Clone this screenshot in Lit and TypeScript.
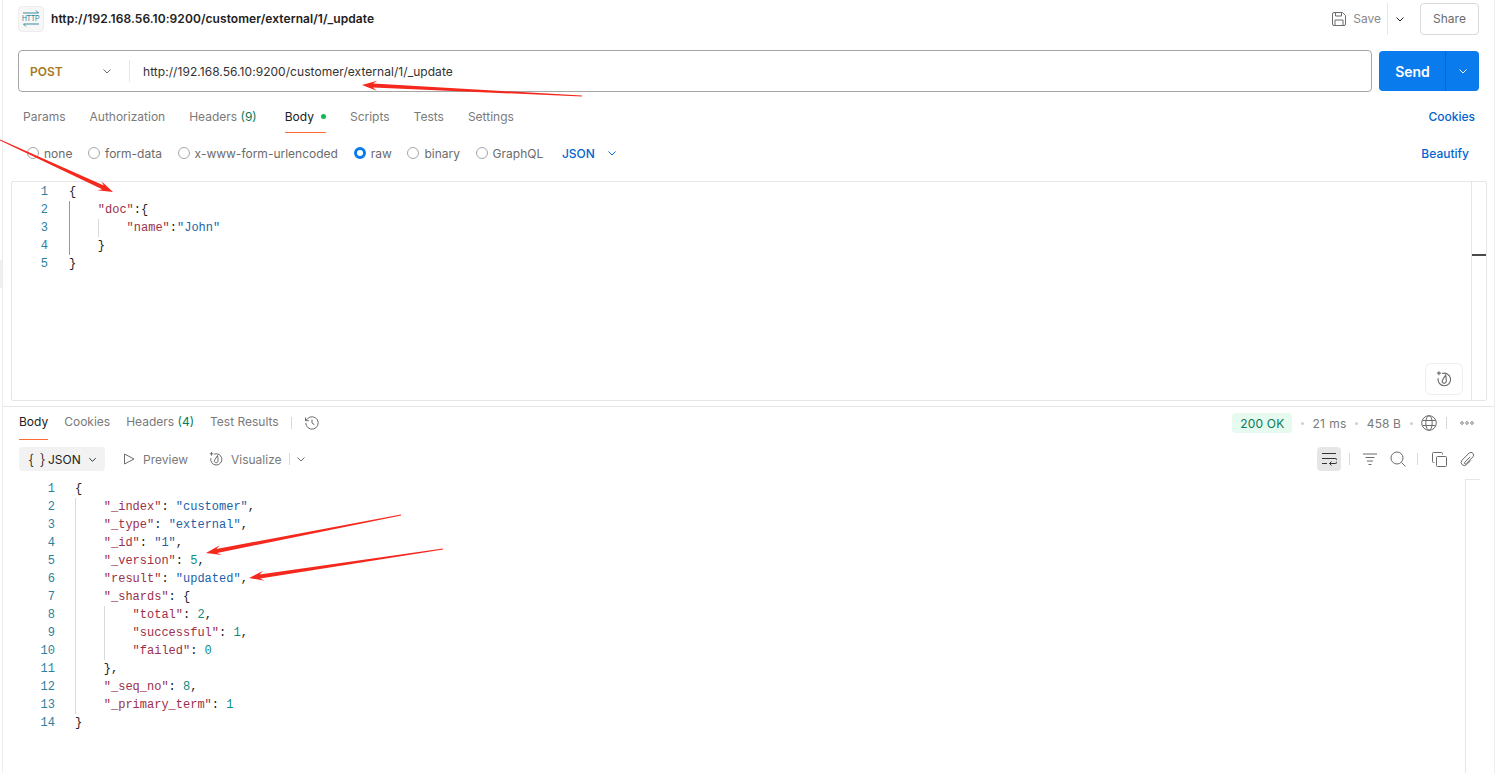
import { LitElement, html, css, svg } from "lit";
import { customElement } from "lit/decorators.js";

type Tok = [string, string];
type Line = { guides: number; toks: Tok[] };

const k = (s: string): Tok => ["k", s];
const v = (s: string): Tok => ["s", s];
const n = (s: string): Tok => ["n", s];
const p = (s: string): Tok => ["p", s];

const reqLines: Line[] = [
  { guides: 0, toks: [p("{")] },
  { guides: 1, toks: [k('"doc"'), p(":{")] },
  { guides: 2, toks: [k('"name"'), p(":"), v('"John"')] },
  { guides: 1, toks: [p("}")] },
  { guides: 0, toks: [p("}")] },
];

const resLines: Line[] = [
  { guides: 0, toks: [p("{")] },
  { guides: 1, toks: [k('"_index"'), p(": "), v('"customer"'), p(",")] },
  { guides: 1, toks: [k('"_type"'), p(": "), v('"external"'), p(",")] },
  { guides: 1, toks: [k('"_id"'), p(": "), v('"1"'), p(",")] },
  { guides: 1, toks: [k('"_version"'), p(": "), n("5"), p(",")] },
  { guides: 1, toks: [k('"result"'), p(": "), v('"updated"'), p(",")] },
  { guides: 1, toks: [k('"_shards"'), p(": {")] },
  { guides: 2, toks: [k('"total"'), p(": "), n("2"), p(",")] },
  { guides: 2, toks: [k('"successful"'), p(": "), n("1"), p(",")] },
  { guides: 2, toks: [k('"failed"'), p(": "), n("0")] },
  { guides: 1, toks: [p("},")] },
  { guides: 1, toks: [k('"_seq_no"'), p(": "), n("8"), p(",")] },
  { guides: 1, toks: [k('"_primary_term"'), p(": "), n("1")] },
  { guides: 0, toks: [p("}")] },
];

const arrows: [number, number, number, number][] = [
  [582, 96, 362, 85],
  [0, 140, 113, 192],
  [401, 515, 206, 553],
  [443, 549, 249, 578],
];

function arrowPoints(x1: number, y1: number, x2: number, y2: number): string {
  const dx = x2 - x1, dy = y2 - y1;
  const len = Math.hypot(dx, dy);
  const ux = dx / len, uy = dy / len;
  const nx = -uy, ny = ux;
  const at = (d: number, w: number) =>
    `${(x2 - ux * d + nx * w).toFixed(1)},${(y2 - uy * d + ny * w).toFixed(1)}`;
  const tail = (w: number) => `${(x1 + nx * w).toFixed(1)},${(y1 + ny * w).toFixed(1)}`;
  return [tail(0.5), at(11, 2), at(15, 5), at(0, 0), at(15, -5), at(11, -2), tail(-0.5)].join(" ");
}

const chevron = (cls = "chev") => html`<svg class=${cls} viewBox="0 0 12 12"><path d="M2.5 4.5 6 8l3.5-3.5" fill="none" stroke="currentColor" stroke-width="1"/></svg>`;

const visualizeIcon = (size: number) => html`<svg width=${size} height=${size} viewBox="0 0 16 16" fill="none" stroke="#6b6b6b" stroke-width="1"><path d="M6.2 3.2a5.6 5.6 0 1 1-3.4 4"/><path d="M9.500 4.500 6.800 8.800a1.800 1.800 0 1 0 3.100 1.700c.4-1.200 0-3.700-.4-6Z"/><path d="M3.500 1v3.600M1.700 2.800h3.600"/></svg>`;

@customElement("app-root")
export class AppRoot extends LitElement {
  static styles = css`
    :host { display: block; position: relative; width: 1502px; height: 773px; overflow: hidden; background: #fff;
      font-family: Inter, "Liberation Sans", sans-serif; font-size: 12px; color: #6b6b6b; }
    * { box-sizing: border-box; }
    .frame { width: 1493px; height: 773px; margin-left: 2px; border-left: 1px solid #ededed; border-right: 1px solid #ededed; display: flex; flex-direction: column; }
    .row { display: flex; align-items: center; }
    .head { height: 37px; padding: 0 15px; justify-content: space-between; }
    .head-left { gap: 7px; }
    .http { width: 26px; height: 26px; border: 1px solid #ededed; border-radius: 4px; background: #f7f7f7; display: flex; flex-direction: column; align-items: center; justify-content: center; color: #1f7f8f; }
    .http-text { font-family: "Liberation Sans", sans-serif; font-size: 9px; line-height: 9px; transform: scaleX(.75); white-space: nowrap; }
    .http svg { display: block; }
    .title { font-weight: 600; color: #212121; letter-spacing: .07px; }
    .head-right { color: #8a8a8a; }
    .save { width: 14px; height: 14px; margin-right: 7px; }
    .vsep { width: 1px; background: #e6e6e6; }
    .vsep.tall { height: 32px; margin-left: 6px; }
    .head-chev { color: #212121; margin: 0 14px 0 6px; width: 12px; height: 12px; }
    .share { width: 59px; height: 32px; border: 1px solid #d9d9d9; border-radius: 4px; display: flex; align-items: center; justify-content: center; color: #6b6b6b; }
    .urlrow { margin-top: 13px; padding: 0 15px; gap: 7px; height: 42px; }
    .urlbox { width: 1354px; height: 42px; border: 1px solid #a6a6a6; border-radius: 4px; }
    .method { width: 110px; padding-left: 11px; justify-content: space-between; padding-right: 16px; font-weight: 600; color: #a8791c; }
    .method .chev { color: #6b6b6b; width: 12px; height: 12px; }
    .urlsep { width: 1px; height: 22px; background: #e6e6e6; }
    .url { margin-left: 13px; color: #333; letter-spacing: .05px; }
    .send { width: 100px; height: 40px; border-radius: 4px; background: #097bed; color: #fff; }
    .send-main { width: 67px; padding-left: 1px; height: 100%; display: flex; align-items: center; justify-content: center; font-size: 14px; font-weight: 600; border-right: 1px solid #0768c9; }
    .send-drop { flex: 1; display: flex; justify-content: center; align-items: center; }
    .send-drop .chev { width: 12px; height: 12px; }
    .tabs { height: 36px; margin-top: 5px; padding: 0 19px 0 20px; justify-content: space-between; }
    .tablist { gap: 24px; align-self: stretch; }
    .tab { height: 100%; padding-top: 4px; display: flex; align-items: center; gap: 6px; border-bottom: 1px solid transparent; color: #7a7a7a; }
    .tab.on { color: #212121; border-bottom: 1px solid #ff6c37; }
    .tab.body { margin-left: 4px; gap: 7px; }
    .count { color: #0a7a56; }
    .dot { width: 5px; height: 5px; border-radius: 50%; background: #0cbb52; }
    .link { color: #0265d2; font-weight: 500; }
    .link.cookies { padding-top: 2px; }
    .opts { height: 40px; padding: 0 25px 0 24px; justify-content: space-between; }
    .optlist { gap: 15.7px; }
    .opt { display: flex; align-items: center; gap: 5px; color: #6b6b6b; }
    .radio { width: 12px; height: 12px; border-radius: 50%; border: 1px solid #a6a6a6; background: #fff; }
    .radio.on { border: 3px solid #097bed; }
    .json { color: #0265d2; font-weight: 500; margin-left: 3px; gap: 11px; }
    .json .chev { width: 12px; height: 12px; }
    .editor { position: relative; margin: 8px 7px 0 8px; height: 220px; border: 1px solid #e6e6e6; border-radius: 2px; display: flex; }
    .code { font-family: "Liberation Mono", "DejaVu Sans Mono", monospace; font-size: 12px; line-height: 18px; }
    .ln { display: flex; height: 18px; white-space: pre; }
    .num { text-align: right; color: #2d7f9e; flex: none; }
    .req { padding: 1px 0 0 1px; flex: 1; }
    .req .num { width: 35px; margin-right: 21px; }
    .res .num { width: 34px; margin-right: 20px; }
    .guide { display: inline-block; width: 28.8px; height: 18px; border-left: 1px solid #d9d9d9; flex: none; }
    .guide.first { border-left-color: #9a9a9a; }
    .res .guide.first { border-left-color: #d9d9d9; }
    .k { color: #9c2f4a; }
    .s { color: #1d5fa8; }
    .n { color: #0f8a7e; }
    .p { color: #212121; }
    .ed-scroll { width: 15px; border-left: 1px solid #e6e6e6; flex: none; position: relative; }
    .tick { position: absolute; left: 0; right: 0; top: 72px; height: 1.500px; background: #4a4a4a; }
    .magic { position: absolute; right: 23px; bottom: 5px; width: 38px; height: 32px; border: 1px solid #ededed; border-radius: 6px; background: #fff; display: flex; align-items: center; justify-content: center; }
    .divider { height: 1px; background: #e6e6e6; margin-top: 5px; }
    .rtabs { height: 33px; padding: 0 20px 1px 16px; justify-content: space-between; }
    .rtablist { gap: 16px; align-self: stretch; }
    .rtablist .tab { height: 33px; padding: 0 0 2px; }
    .sep16 { width: 1px; height: 12px; background: #d9d9d9; margin: 0 -4px; }
    .history { margin-left: -7px; }
    .status { gap: 8.5px; color: #7a7a7a; }
    .status .metric { letter-spacing: .1px; }
    .status .wide { letter-spacing: .4px; }
    .badge { width: 60px; height: 20px; background: #e6faf0; border-radius: 4px; color: #0a7a56; display: flex; align-items: center; justify-content: center; letter-spacing: .2px; }
    .tiny { width: 3px; height: 3px; border-radius: 50%; background: #d0d0d0; }
    .sep { width: 1px; height: 12px; background: #d9d9d9; }
    .ooo { margin-left: 5px; display: flex; }
    .tools { height: 38px; margin-bottom: 1px; padding: 0 19px 0 16px; justify-content: space-between; }
    .chip { width: 86px; height: 24px; background: #f2f2f2; border-radius: 4px; padding-left: 9px; gap: 6px; color: #212121; }
    .brace { font-size: 15px; width: 14px; white-space: nowrap; font-weight: 300; letter-spacing: .5px; }
    .chip .chev { width: 11px; height: 11px; }
    .action { gap: 8px; color: #7a7a7a; }
    .wrap { width: 24px; height: 24px; border-radius: 4px; background: #e6e6e6; display: flex; align-items: center; justify-content: center; }
    .more { margin-left: 5px; color: #6b6b6b; }
    .more .chev { width: 12px; height: 12px; }
    .respane { flex: 1; display: flex; min-height: 0; }
    .res { flex: 1; margin-left: 18px; padding-top: 1px; }
    .res-scroll { width: 15px; margin-right: 14px; border-left: 1px solid #e6e6e6; border-top: 1px solid #e6e6e6; }
    .overlay { position: absolute; inset: 0; width: 1502px; height: 773px; pointer-events: none; }
    .handle { position: absolute; left: 0; top: 260px; width: 2px; height: 28px; background: #f0f0f0; }
  `;

  private renderLines(lines: Line[]) {
    return lines.map((l, i) => html`<div class="ln"><span class="num">${i + 1}</span>${Array.from({ length: l.guides }, (_, g) => html`<span class="guide ${g === 0 ? "first" : ""}"></span>`)}${l.toks.map(([c, t]) => html`<span class=${c}>${t}</span>`)}</div>`);
  }

  render() {
    return html`
      <div class="handle"></div>
      <div class="frame">
        <div class="row head">
          <div class="row head-left">
            <div class="http">
              <svg width="18" height="4" viewBox="0 0 18 4" fill="none" stroke="currentColor" stroke-width=".9"><path d="M1 3h15.500l-2.500-2.500"/></svg>
              <span class="http-text">HTTP</span>
              <svg width="18" height="4" viewBox="0 0 18 4" fill="none" stroke="currentColor" stroke-width=".9"><path d="M17 1H1.500L4 3.500"/></svg>
            </div>
            <span class="title">http://192.168.56.10:9200/customer/external/1/_update</span>
          </div>
          <div class="row head-right">
            <svg class="save" viewBox="0 0 14 14" fill="none" stroke="#6b6b6b"><path d="M.5 2A1.500 1.500 0 0 1 2 .5h8.500l3 3V12a1.500 1.500 0 0 1-1.500 1.500H2A1.500 1.500 0 0 1 .5 12Z"/><path d="M3.500.5v3.500h6V.5M3 13.500V8h8v5.500"/></svg>
            <span>Save</span>
            <span class="vsep tall"></span>
            ${chevron("head-chev")}
            <div class="share">Share</div>
          </div>
        </div>
        <div class="row urlrow">
          <div class="row urlbox">
            <div class="row method"><span>POST</span>${chevron()}</div>
            <span class="urlsep"></span>
            <span class="url">http://192.168.56.10:9200/customer/external/1/_update</span>
          </div>
          <div class="row send"><div class="send-main">Send</div><div class="send-drop">${chevron()}</div></div>
        </div>
        <div class="row tabs">
          <div class="row tablist">
            <div class="tab">Params</div>
            <div class="tab">Authorization</div>
            <div class="tab"><span>Headers <span class="count">(9)</span></span></div>
            <div class="tab on body">Body<span class="dot"></span></div>
            <div class="tab">Scripts</div>
            <div class="tab">Tests</div>
            <div class="tab">Settings</div>
          </div>
          <span class="link cookies">Cookies</span>
        </div>
        <div class="row opts">
          <div class="row optlist">
            ${["none", "form-data", "x-www-form-urlencoded", "raw", "binary", "GraphQL"].map((o) => html`<label class="opt"><span class="radio ${o === "raw" ? "on" : ""}"></span>${o}</label>`)}
            <div class="row json"><span>JSON</span>${chevron()}</div>
          </div>
          <span class="link">Beautify</span>
        </div>
        <div class="editor">
          <div class="code req">${this.renderLines(reqLines)}</div>
          <div class="ed-scroll"><div class="tick"></div></div>
          <div class="magic">${visualizeIcon(18)}</div>
        </div>
        <div class="divider"></div>
        <div class="row rtabs">
          <div class="row rtablist">
            <div class="tab on">Body</div>
            <div class="tab">Cookies</div>
            <div class="tab"><span>Headers <span class="count">(4)</span></span></div>
            <div class="tab">Test Results</div>
            <div class="row"><span class="sep16"></span></div>
            <div class="row history">
              <svg width="16" height="16" viewBox="0 0 16 16" fill="none" stroke="#6b6b6b"><path d="M1.800 8a6.200 6.200 0 1 0 1.700-4.300L1.500 5.700M1.500 2.500v3.200h3.200M8 4.500V8l2.500 1.800"/></svg>
            </div>
          </div>
          <div class="row status">
            <span class="badge">200 OK</span><span class="tiny"></span><span class="metric wide">21 ms</span><span class="tiny"></span><span class="metric">458 B</span><span class="tiny"></span>
            <svg width="16" height="16" viewBox="0 0 16 16" fill="none" stroke="#6b6b6b"><circle cx="8" cy="8" r="7.300"/><ellipse cx="8" cy="8" rx="3.200" ry="7.300"/><path d="M1.500 5.500h13M1.500 10.500h13"/></svg>
            <span class="sep"></span>
            <svg class="ooo" width="14" height="4" viewBox="0 0 14 4" fill="none" stroke="#6b6b6b" stroke-width=".8"><circle cx="2" cy="2" r="1.300"/><circle cx="7" cy="2" r="1.300"/><circle cx="12" cy="2" r="1.300"/></svg>
          </div>
        </div>
        <div class="row tools">
          <div class="row">
            <div class="row chip"><span class="brace">{ }</span><span>JSON</span>${chevron()}</div>
            <div class="row action" style="margin-left:18px">
              <svg width="12" height="12" viewBox="0 0 12 12" fill="none" stroke="#6b6b6b"><path d="M1.500 1v10L11 6Z"/></svg>
              <span>Preview</span>
            </div>
            <div class="row action" style="margin-left:20px">
              ${visualizeIcon(16)}
              <span style="margin-left:-1px">Visualize</span>
            </div>
            <span class="sep" style="margin-left:7px"></span>
            <span class="row more">${chevron()}</span>
          </div>
          <div class="row">
            <div class="wrap"><svg width="16" height="14" viewBox="0 0 16 14" fill="none" stroke="#333"><path d="M1 1.500h14M1 6.500h13a2 2 0 0 1 0 5H8.500M10.500 9.500l-2 2 2 2M1 11.500h5"/></svg></div>
            <span class="sep" style="margin-left:8px"></span>
            <svg style="margin-left:12px" width="16" height="12" viewBox="0 0 16 12" fill="none" stroke="#6b6b6b"><path d="M1 1h14M3.500 4.500h9M5 8h6M6.500 11.500h3"/></svg>
            <svg style="margin-left:12px" width="16" height="16" viewBox="0 0 16 16" fill="none" stroke="#6b6b6b"><circle cx="7" cy="7" r="6"/><path d="m11.500 11.500 4 4"/></svg>
            <span class="sep" style="margin-left:11px"></span>
            <svg style="margin-left:14px" width="15" height="15" viewBox="0 0 15 15" fill="none" stroke="#6b6b6b"><rect x="4.500" y="4.500" width="10" height="10" rx="1"/><path d="M2.500 10.500h-1a1 1 0 0 1-1-1V1.500a1 1 0 0 1 1-1h8a1 1 0 0 1 1 1v1"/></svg>
            <svg style="margin-left:13px" width="15" height="15" viewBox="0 0 15 15" fill="none" stroke="#6b6b6b"><path d="M10.200 4.800 4.600 10.400a1 1 0 0 0 1.400 1.400l7-7A2.700 2.700 0 0 0 9.200 1L1.900 8.300a3.200 3.200 0 0 0 4.500 4.500l4.300-4.300"/></svg>
          </div>
        </div>
        <div class="respane">
          <div class="code res">${this.renderLines(resLines)}</div>
          <div class="res-scroll"></div>
        </div>
      </div>
      <svg class="overlay" viewBox="0 0 1502 773">
        ${arrows.map(([a, b, c, d]) => svg`<polygon points=${arrowPoints(a, b, c, d)} fill="#f5281e"/>`)}
      </svg>
    `;
  }
}
